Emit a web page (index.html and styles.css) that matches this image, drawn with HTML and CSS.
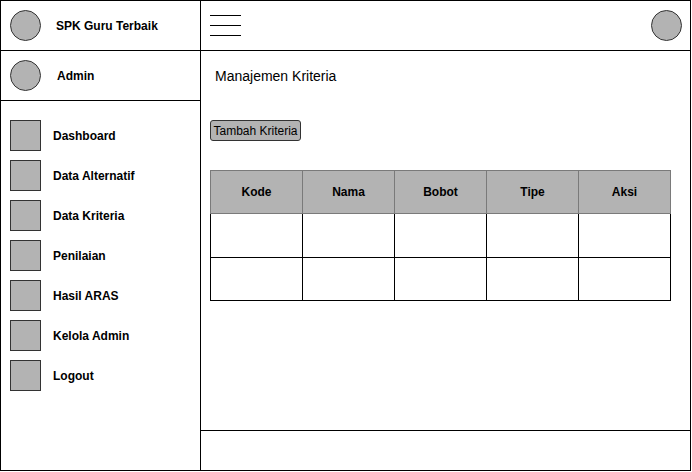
FILE: index.html
```html
<!DOCTYPE html>
<html lang="id">
<head>
<meta charset="utf-8">
<title>SPK Guru Terbaik</title>
<link rel="stylesheet" href="styles.css">
</head>
<body>
<div class="app">
  <aside class="sidebar">
    <div class="side-row">
      <span class="avatar"></span>
      <span class="brand">SPK Guru Terbaik</span>
    </div>
    <div class="side-row">
      <span class="avatar"></span>
      <span class="user">Admin</span>
    </div>
    <nav class="menu">
      <a class="menu-item"><span class="menu-icon"></span><span>Dashboard</span></a>
      <a class="menu-item"><span class="menu-icon"></span><span>Data Alternatif</span></a>
      <a class="menu-item"><span class="menu-icon"></span><span>Data Kriteria</span></a>
      <a class="menu-item"><span class="menu-icon"></span><span>Penilaian</span></a>
      <a class="menu-item"><span class="menu-icon"></span><span>Hasil ARAS</span></a>
      <a class="menu-item"><span class="menu-icon"></span><span>Kelola Admin</span></a>
      <a class="menu-item"><span class="menu-icon"></span><span>Logout</span></a>
    </nav>
  </aside>
  <main class="main">
    <header class="topbar">
      <span class="burger"><i></i><i></i><i></i></span>
      <span class="avatar"></span>
    </header>
    <section class="content">
      <h1 class="title">Manajemen Kriteria</h1>
      <button class="btn">Tambah Kriteria</button>
      <table class="grid">
        <thead>
          <tr><th>Kode</th><th>Nama</th><th>Bobot</th><th>Tipe</th><th>Aksi</th></tr>
        </thead>
        <tbody>
          <tr class="r1"><td></td><td></td><td></td><td></td><td></td></tr>
          <tr class="r2"><td></td><td></td><td></td><td></td><td></td></tr>
        </tbody>
      </table>
    </section>
    <footer class="footer"></footer>
  </main>
</div>
</body>
</html>
```
FILE: styles.css
```css
* { box-sizing: border-box; }
html, body { margin: 0; padding: 0; background: #fff; }
body { font-family: "Liberation Sans", Arial, sans-serif; color: #000; }

.app {
  width: 691px;
  height: 471px;
  border: 1px solid #000;
  display: grid;
  grid-template-columns: 200px 1fr;
}

.sidebar {
  border-right: 1px solid #000;
  display: flex;
  flex-direction: column;
}

.side-row {
  height: 50px;
  border-bottom: 1px solid #000;
  display: flex;
  align-items: center;
  padding-left: 9px;
}

.avatar {
  width: 31px;
  height: 31px;
  border-radius: 50%;
  background: #b3b3b3;
  border: 1px solid #333;
  flex: none;
}

.brand { margin-left: 15px; font-size: 12px; font-weight: bold; }
.user { margin-left: 16px; font-size: 12px; font-weight: bold; }

.menu {
  display: flex;
  flex-direction: column;
  gap: 9px;
  padding: 19px 0 0 9px;
}

.menu-item {
  display: flex;
  align-items: center;
  gap: 12px;
  font-size: 12px;
  font-weight: bold;
}

.menu-icon {
  width: 31px;
  height: 31px;
  background: #b3b3b3;
  border: 1px solid #333;
  flex: none;
}

.main {
  display: flex;
  flex-direction: column;
}

.topbar {
  height: 50px;
  border-bottom: 1px solid #000;
  display: flex;
  align-items: center;
  justify-content: space-between;
  padding: 0 8px 1px 9px;
}

.burger {
  width: 31px;
  height: 21px;
  display: flex;
  flex-direction: column;
  justify-content: space-between;
}
.burger i {
  display: block;
  height: 1px;
  background: #000;
}

.content {
  flex: 1;
  padding: 17px 0 0 9px;
}

.title {
  margin: 0 0 0 5px;
  font-size: 14px;
  font-weight: normal;
  line-height: 16px;
}

.btn {
  display: block;
  margin-top: 36px;
  width: 91px;
  height: 21px;
  padding: 0;
  font-family: inherit;
  font-size: 12px;
  color: #000;
  background: #b3b3b3;
  border: 1px solid #333;
  border-radius: 3px;
}

.grid {
  margin-top: 29px;
  border-collapse: collapse;
  table-layout: fixed;
  width: 461px;
}

.grid th, .grid td {
  width: 92px;
  padding: 0;
}

.grid th {
  height: 43px;
  background: #b3b3b3;
  border: 1px solid #7a7a7a;
  font-size: 12px;
  font-weight: bold;
  text-align: center;
}

.grid td {
  border: 1px solid #000;
}
.grid .r1 td { height: 44px; }
.grid .r2 td { height: 43px; }

.footer {
  height: 40px;
  border-top: 1px solid #000;
}
```
